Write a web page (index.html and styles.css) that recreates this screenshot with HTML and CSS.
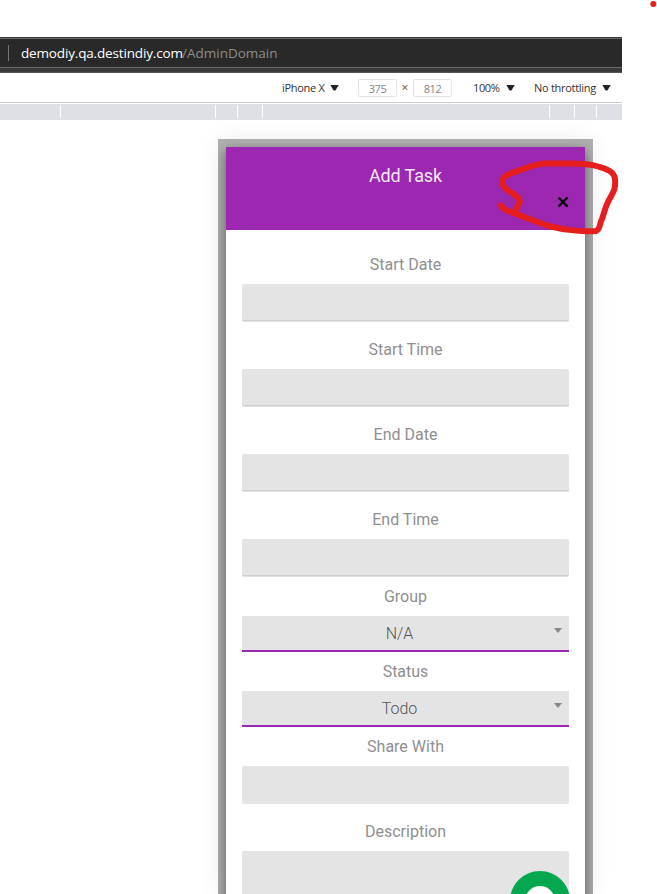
FILE: index.html
```
<!DOCTYPE html>
<html lang="en">
<head>
<meta charset="utf-8">
<title>Add Task</title>
<link rel="stylesheet" href="styles.css">
</head>
<body>
<div class="browser">
  <div class="address"><span class="divider"></span><span class="host">demodiy.qa.destindiy.com</span><span class="path">/AdminDomain</span></div>
  <div class="chrome-edge"></div>
  <div class="toolbar">
    <span class="device">iPhone X</span><i class="arrow"></i>
    <span class="size">375</span><span class="times">×</span><span class="size">812</span>
    <span class="zoom">100%</span><i class="arrow"></i>
    <span class="throttle">No throttling</span><i class="arrow"></i>
  </div>
  <div class="ruler"><i></i><i></i><i></i><i></i><i></i><i></i><i></i></div>
  <div class="phone">
    <div class="modal">
      <header class="header"><h1>Add Task</h1>
        <svg class="close" width="12" height="12" viewBox="0 0 12 12"><path d="M1.500 1.500l9 9M10.500 1.500l-9 9"/></svg>
      </header>
      <form class="form">
        <label>Start Date</label><div class="field lined"></div>
        <label>Start Time</label><div class="field lined"></div>
        <label>End Date</label><div class="field lined"></div>
        <label>End Time</label><div class="field lined last"></div>
        <label>Group</label><div class="select"><span>N/A</span><i></i></div>
        <label>Status</label><div class="select"><span>Todo</span><i></i></div>
        <label>Share With</label><div class="field"></div>
        <label>Description</label><div class="field tall"></div>
      </form>
    </div>
  </div>
</div>
<div class="fab"></div>
<svg class="marks" width="657" height="894" viewBox="0 0 657 894">
  <path d="M501 205.500C502 209 507 210.500 511 212C524 217 537 222 549 226C564 230 584 232 596 231C601 229 599 224 602 219C605 210 606 205 609 200C613 192 616 190 615 179C614 171 606 169 598 166.500C587 163 577 163.500 565 163.500H545C533 164 522 170 513 172.500C506 175 502 178 502 181C502 187 507 190 512 193C518 197 522 201 518 205L516.500 209"/>
  <circle cx="653.300" cy="4" r="3"/>
</svg>
</body>
</html>
```
FILE: styles.css
```
* { box-sizing: border-box; }
body { margin: 0; position: relative; height: 894px; overflow: hidden; background: #fff; font-family: Roboto, sans-serif; }
.browser { width: 622px; height: 894px; padding-top: 37px; overflow: hidden; }
.address { height: 31px; display: flex; align-items: center; background: #292929; border-top: 1px solid #3b3b3b; border-bottom: 1px solid #696969; box-shadow: inset 0 1px #656565; padding: 1px 0 0 8px; font: 13.5px "Open Sans", sans-serif; white-space: nowrap; }
.divider { width: 1px; height: 16px; background: #777; margin-right: 12px; }
.host { color: #fff; width: 161px; letter-spacing: -.16px; }
.path { color: #8c8c8c; letter-spacing: 0; }
.chrome-edge { height: 5px; background: #3a3a3a; border-bottom: 1px solid #555; }
.toolbar { height: 30px; border-bottom: 1px solid #c9ccd1; display: flex; align-items: center; padding-left: 282px; font: 11px "Open Sans", sans-serif; color: #333; white-space: nowrap; }
.arrow { width: 9px; height: 6px; background: #202124; clip-path: polygon(0 0, 100% 0, 60% 100%, 40% 100%); }
.device { width: 48px; letter-spacing: -.3px; }
.size { width: 39px; height: 18px; border: 1px solid #e4e4e4; border-radius: 2px; color: #858585; text-align: center; line-height: 17px; letter-spacing: -.4px; }
.arrow + .size { margin-left: 19px; }
.times { width: 16px; text-align: center; font-size: 12px; color: #6b4a20; }
.zoom { width: 33px; margin-left: 21px; letter-spacing: -.4px; }
.throttle { width: 68px; margin-left: 19px; letter-spacing: -.28px; }
.ruler { height: 16px; margin-top: 1px; background: #dde1e6; display: grid; grid-template-columns: 155px 22px 25px 287px 25px 22px 1px; padding: 1px 0 2px 60px; }
.ruler i { width: 1px; background: #fff; }
.phone { width: 375px; height: 755px; margin: 19px 0 0 218px; padding: 8px 8px 0; background: #b0b0b0; box-shadow: 0 0 20px rgba(0,0,0,.07); }
.modal { height: 760px; background: #fff; box-shadow: 0 4px 12px rgba(0,0,0,.5); clip-path: inset(-8px -8px 0); }
.header { height: 83px; background: #9c27b0; display: flex; flex-direction: column; align-items: center; }
h1 { margin: 18px 0 0; font-size: 18px; line-height: 22px; font-weight: 400; letter-spacing: -.15px; color: #f5e7f7; }
.close { align-self: flex-end; margin: 9px 16.500px 0 0; fill: none; stroke: #000; stroke-width: 2.200; }
.form { padding: 17px 16px 0; text-align: center; }
label { display: block; height: 37px; padding-top: 8px; font-size: 16px; line-height: 20px; color: #8f8f8f; }
.field { height: 38px; background: #e4e4e4; border-radius: 2px; margin-bottom: 10px; }
.lined { border-bottom: 1px solid #e2e2e2; box-shadow: inset 0 -1px #cfcfcf; }
.last { margin-bottom: 2px; }
.select { height: 36px; background: #e4e4e4; border-bottom: 2px solid #9c27b0; margin-bottom: 2px; display: flex; align-items: center; padding-right: 7px; font-size: 16px; font-weight: 300; color: #555; }
.select span { flex: 1; padding-left: 3px; }
.select i { width: 8px; height: 5px; margin-top: -5px; background: #888; clip-path: polygon(0 0, 100% 0, 50% 100%); }
.tall { height: 80px; }
.fab { position: absolute; left: 510px; top: 871px; width: 60px; height: 60px; border: 15px solid #05a84e; border-radius: 50%; background: #fff; }
.marks { position: absolute; left: 0; top: 0; pointer-events: none; }
.marks path { fill: none; stroke: #e61e1e; stroke-width: 6; stroke-linecap: round; stroke-linejoin: round; }
.marks circle { fill: #e61e1e; }
```
